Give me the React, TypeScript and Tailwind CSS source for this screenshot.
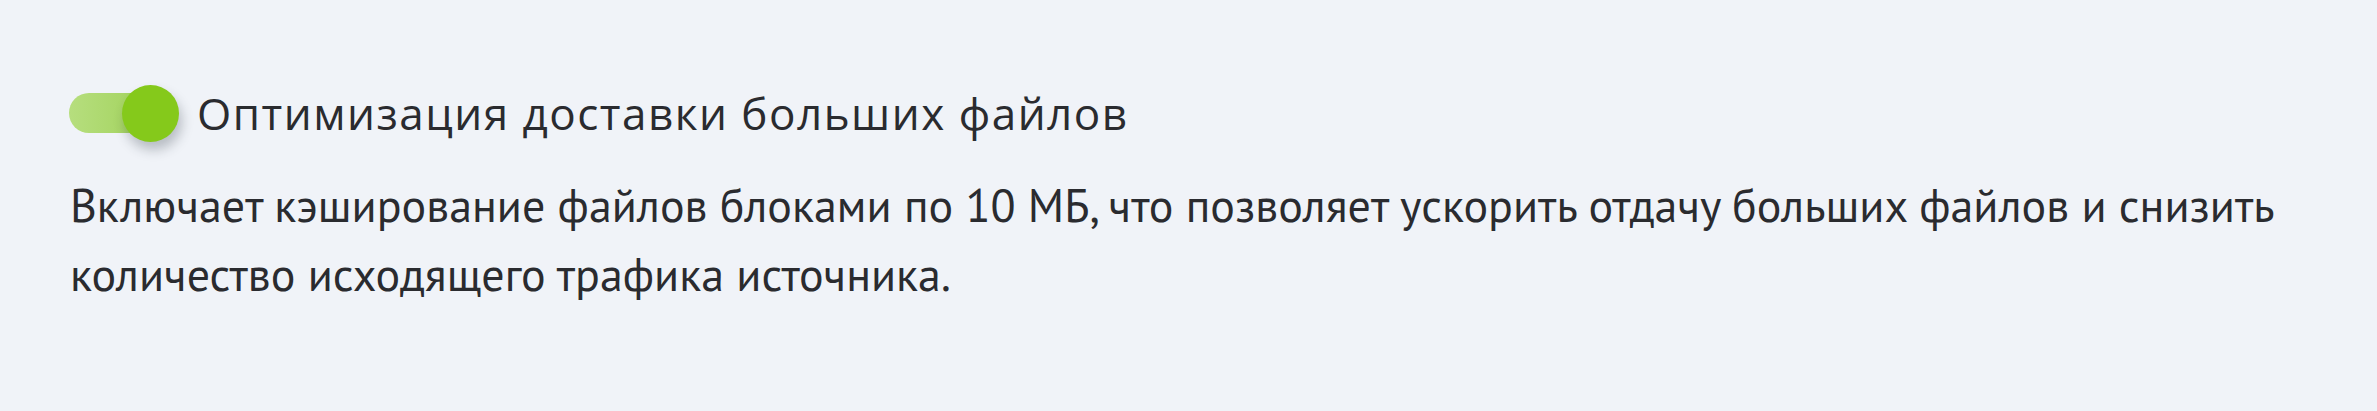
import { useState } from "react"

function Toggle({ checked, onChange }: { checked: boolean; onChange: (v: boolean) => void }) {
  return (
    <button
      type="button"
      role="switch"
      aria-checked={checked}
      onClick={() => onChange(!checked)}
      className="relative w-[110px] h-[57px] shrink-0"
    >
      <span className="absolute left-0 top-[8px] w-[104px] h-[40px] rounded-full bg-gradient-to-r from-[#b6de7e] to-[#9ccf4f]" />
      <span className="absolute right-0 top-0 w-[57px] h-[57px] rounded-full bg-[#85c91b] shadow-[3px_8px_12px_rgba(40,50,60,0.28)]" />
    </button>
  )
}

export default function App() {
  const [enabled, setEnabled] = useState(true)

  return (
    <div className="bg-[#f0f3f8] w-full min-h-[411px] pl-[69px] pt-[85px] text-[#2a2b2f]">
      <div className="flex items-center gap-[18px]">
        <Toggle checked={enabled} onChange={setEnabled} />
        <span className="font-['Open_Sans',sans-serif] text-[44px] leading-[57px] tracking-[1.5px] whitespace-nowrap">
          Оптимизация доставки больших файлов
        </span>
      </div>
      <p className="mt-[29px] w-[2260px] pl-[1px] font-['PT_Sans','Liberation_Sans',sans-serif] text-[46px] leading-[69px]">
        Включает кэширование файлов блоками по 10 МБ, что позволяет ускорить отдачу больших файлов и снизить
        количество исходящего трафика источника.
      </p>
    </div>
  )
}
